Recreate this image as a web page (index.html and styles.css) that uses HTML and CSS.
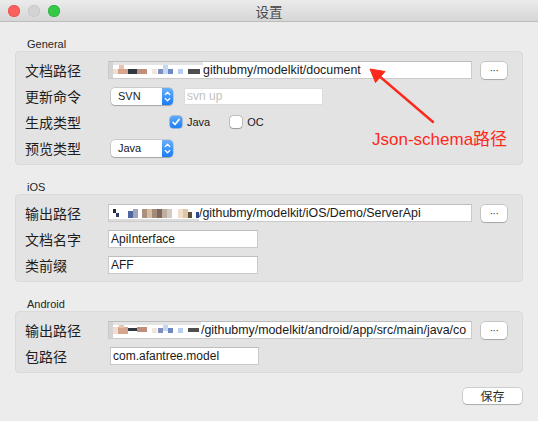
FILE: index.html
```html
<!DOCTYPE html>
<html>
<head>
<meta charset="utf-8">
<title>设置</title>
<link rel="stylesheet" href="styles.css">
</head>
<body>
<div class="window">
  <div class="titlebar">
    <div class="lights">
      <span class="light red"></span>
      <span class="light gray"></span>
      <span class="light green"></span>
    </div>
    <div class="title">设置</div>
    <div></div>
  </div>

  <div class="content">
    <div class="group-label">General</div>
    <div class="box">
      <div class="row">
        <span class="label">文档路径</span>
        <div class="field wide path">
          <span class="mosaic mg"></span>
          <span class="val">githubmy/modelkit/document</span>
        </div>
        <button class="btn dots">···</button>
      </div>
      <div class="row">
        <span class="label">更新命令</span>
        <div class="popup">
          <span class="popup-text">SVN</span>
          <span class="stepper"><svg width="11" height="17" viewBox="0 0 11 17"><path d="M3.2 6.6 L5.5 4.3 L7.8 6.6 M3.2 10.4 L5.5 12.7 L7.8 10.4" fill="none" stroke="#fff" stroke-width="1.3" stroke-linecap="round" stroke-linejoin="round"/></svg></span>
        </div>
        <div class="field cmd"><span class="placeholder">svn up</span></div>
      </div>
      <div class="row">
        <span class="label">生成类型</span>
        <label class="check first">
          <span class="box-check on"><svg width="12" height="12" viewBox="0 0 12 12"><path d="M3 6.3 L5 8.5 L9 3.4" fill="none" stroke="#fff" stroke-width="1.6" stroke-linecap="round" stroke-linejoin="round"/></svg></span>
          <span class="check-text">Java</span>
        </label>
        <label class="check second">
          <span class="box-check"></span>
          <span class="check-text">OC</span>
        </label>
      </div>
      <div class="row">
        <span class="label">预览类型</span>
        <div class="popup">
          <span class="popup-text">Java</span>
          <span class="stepper"><svg width="11" height="17" viewBox="0 0 11 17"><path d="M3.2 6.6 L5.5 4.3 L7.8 6.6 M3.2 10.4 L5.5 12.7 L7.8 10.4" fill="none" stroke="#fff" stroke-width="1.3" stroke-linecap="round" stroke-linejoin="round"/></svg></span>
        </div>
      </div>
    </div>

    <div class="group-label">iOS</div>
    <div class="box">
      <div class="row">
        <span class="label">输出路径</span>
        <div class="field wide path">
          <span class="mosaic mi"></span>
          <span class="val">/githubmy/modelkit/iOS/Demo/ServerApi</span>
        </div>
        <button class="btn dots">···</button>
      </div>
      <div class="row">
        <span class="label">文档名字</span>
        <div class="field short"><span class="val">ApiInterface</span></div>
      </div>
      <div class="row">
        <span class="label">类前缀</span>
        <div class="field short"><span class="val">AFF</span></div>
      </div>
    </div>

    <div class="group-label">Android</div>
    <div class="box">
      <div class="row">
        <span class="label">输出路径</span>
        <div class="field wide path">
          <span class="mosaic ma"></span>
          <span class="val">/githubmy/modelkit/android/app/src/main/java/co</span>
        </div>
        <button class="btn dots">···</button>
      </div>
      <div class="row">
        <span class="label">包路径</span>
        <div class="field short pkg"><span class="val">com.afantree.model</span></div>
      </div>
    </div>

    <div class="footer">
      <button class="btn save">保存</button>
    </div>
  </div>

  <svg class="annot-arrow" width="538" height="421" viewBox="0 0 538 421">
    <path d="M433 122 L378 75" stroke="#fb2a1c" stroke-width="2.4" stroke-linecap="round" fill="none"/>
    <path d="M370 69 L385 71.5 L375.5 82.5 Z" fill="#fb2a1c" stroke="#fb2a1c" stroke-width="1" stroke-linejoin="round"/>
  </svg>
  <div class="annot-text">Json-schema路径</div>
</div>
</body>
</html>
```
FILE: styles.css
```css
* { box-sizing: border-box; }

html, body {
  margin: 0;
  padding: 0;
  background: #ececec;
}

.window {
  position: relative;
  width: 538px;
  height: 421px;
  background: #ececec;
  font-family: "Liberation Sans", "Noto Sans CJK SC", sans-serif;
  color: #1d1d1d;
  overflow: hidden;
}

/* title bar */
.titlebar {
  height: 22px;
  display: grid;
  grid-template-columns: 1fr auto 1fr;
  align-items: center;
  background: linear-gradient(#ebebeb, #d6d6d6);
  border-bottom: 1px solid #bdbdbd;
}
.lights {
  display: flex;
  gap: 8px;
  padding-left: 8px;
}
.light {
  width: 12px;
  height: 12px;
  border-radius: 50%;
}
.light.red { background: #fc605c; box-shadow: inset 0 0 0 0.5px #df4744; }
.light.gray { background: #d3d3d3; box-shadow: inset 0 0 0 0.5px #c0c0c0; }
.light.green { background: #35c94a; box-shadow: inset 0 0 0 0.5px #24a732; }
.title {
  font-family: "Noto Sans CJK SC", sans-serif;
  font-size: 13.5px;
  color: #4b4b4b;
  line-height: 22px;
}

/* content */
.content {
  padding: 0 15px;
}
.group-label {
  margin-top: 16px;
  padding-left: 12px;
  font-size: 11px;
  line-height: 13px;
  height: 13px;
  color: #262626;
}
.box {
  background: #e3e3e3;
  border: 1px solid #dadada;
  border-radius: 4px;
  padding: 5px 15px 3px 9px;
}
.row {
  height: 26px;
  display: flex;
  align-items: center;
}
.label {
  width: 83px;
  flex: none;
  font-family: "Noto Sans CJK SC", sans-serif;
  font-size: 14px;
  color: #1e1e1e;
  line-height: 18px;
}

/* text fields */
.field {
  height: 18px;
  background: #fff;
  border: 1px solid #cacaca;
  border-top-color: #bdbdbd;
  display: flex;
  align-items: center;
  padding-left: 2px;
  overflow: hidden;
  white-space: nowrap;
  font-size: 12px;
  color: #1a1a1a;
}
.field.wide { width: 364px; flex: none; }
.field.short { width: 150px; flex: none; }
.field.pkg { margin-left: 2px; width: 149px; }
.field.cmd {
  width: 139px;
  height: 17px;
  margin-left: 11px;
  border-color: #dcdcdc;
}
.placeholder { color: #c2c2c2; }
.field.path {
  padding-left: 0;
  font-size: 12.4px;
}
.val {
  line-height: 16px;
  min-width: 0;
  overflow: hidden;
  white-space: nowrap;
}

/* pixelated (blurred-out) path prefix */
.mosaic {
  flex: none;
  height: 16px;
  background-color: #fff;
  background-repeat: no-repeat;
}
.mosaic.mg {
  width: 94px;
  background-image:
    linear-gradient(#d4d4d4, #d4d4d4),
    linear-gradient(#e4e4e4, #e4e4e4),
    linear-gradient(#e9c3ad, #e9c3ad),
    linear-gradient(#f2ddd0, #f2ddd0),
    linear-gradient(#d5a58e, #d5a58e),
    linear-gradient(#2f3740, #2f3740),
    linear-gradient(#bf8f7c, #bf8f7c),
    linear-gradient(#efe6de, #efe6de),
    linear-gradient(#7d8fbf, #7d8fbf),
    linear-gradient(#c5d8f2, #c5d8f2),
    linear-gradient(#6f87c2, #6f87c2),
    linear-gradient(#b6cff0, #b6cff0),
    linear-gradient(#4f4f4f, #4f4f4f);
  background-position:
    0 0, 0 0, 10px 2px, 4px 7px, 9px 7px, 19px 7px, 28px 7px,
    43px 7px, 49px 7px, 54px 2px, 59px 7px, 69px 7px, 79px 7px;
  background-size:
    4px 16px, 94px 3px, 5px 5px, 5px 5px, 10px 5px, 9px 5px, 10px 5px,
    5px 5px, 5px 5px, 5px 10px, 5px 5px, 5px 5px, 12px 5px;
}
.mosaic.ma {
  width: 92px;
  background-image:
    linear-gradient(#d4d4d4, #d4d4d4),
    linear-gradient(#e4e4e4, #e4e4e4),
    linear-gradient(#e9c3ad, #e9c3ad),
    linear-gradient(#f2ddd0, #f2ddd0),
    linear-gradient(#d5a58e, #d5a58e),
    linear-gradient(#2f3740, #2f3740),
    linear-gradient(#bf8f7c, #bf8f7c),
    linear-gradient(#efe6de, #efe6de),
    linear-gradient(#7d8fbf, #7d8fbf),
    linear-gradient(#c5d8f2, #c5d8f2),
    linear-gradient(#6f87c2, #6f87c2),
    linear-gradient(#b6cff0, #b6cff0),
    linear-gradient(#4f4f4f, #4f4f4f);
  background-position:
    0 0, 0 0, 10px 1px, 4px 5px, 9px 5px, 19px 6px, 28px 5px,
    43px 6px, 49px 6px, 54px 1px, 59px 6px, 69px 6px, 79px 6px;
  background-size:
    4px 16px, 92px 3px, 5px 5px, 5px 7px, 10px 7px, 9px 3px, 10px 5px,
    5px 5px, 5px 5px, 5px 8px, 5px 5px, 5px 5px, 11px 4px;
}
.mosaic.mi {
  width: 90px;
  background-image:
    linear-gradient(#1f2a36, #1f2a36),
    linear-gradient(#2c3f66, #2c3f66),
    linear-gradient(#4f67a0, #4f67a0),
    linear-gradient(#9ea6b8, #9ea6b8),
    linear-gradient(#ad8f80, #ad8f80),
    linear-gradient(#d6bf9f, #d6bf9f),
    linear-gradient(#a38a7b, #a38a7b),
    linear-gradient(#7e675f, #7e675f),
    linear-gradient(#bfae9f, #bfae9f),
    linear-gradient(#d3cbc3, #d3cbc3),
    linear-gradient(#f1ddc9, #f1ddc9),
    linear-gradient(#dfc6a6, #dfc6a6),
    linear-gradient(#5c4d3e, #5c4d3e),
    linear-gradient(#2f4a82, #2f4a82),
    linear-gradient(#dcdcdc, #dcdcdc);
  background-position:
    4px 4px, 7px 8px, 19px 6px, 24px 4px, 33px 4px, 38px 4px, 43px 4px,
    48px 4px, 53px 4px, 58px 4px, 69px 4px, 74px 4px, 79px 7px, 87px 7px, 0 14px;
  background-size:
    3px 4px, 3px 4px, 5px 7px, 5px 9px, 5px 9px, 5px 9px, 5px 9px,
    5px 9px, 5px 9px, 5px 9px, 5px 9px, 5px 9px, 4px 6px, 3px 6px, 90px 2px;
}

/* popup buttons */
.popup {
  flex: none;
  margin-left: 3px;
  width: 62px;
  height: 17px;
  background: #fff;
  border-radius: 4px;
  box-shadow: 0 0 0 0.5px rgba(0, 0, 0, 0.22), 0 1px 1px rgba(0, 0, 0, 0.18);
  display: flex;
  align-items: center;
  justify-content: space-between;
  overflow: hidden;
}
.popup-text {
  padding-left: 7px;
  font-size: 11px;
  color: #1a1a1a;
}
.stepper {
  width: 11px;
  height: 17px;
  background: linear-gradient(#6aaffa, #1a7cf4);
  display: flex;
}

/* checkboxes */
.check {
  display: flex;
  align-items: center;
  gap: 5px;
}
.check.first { margin-left: 62px; }
.check.second { margin-left: 20px; }
.box-check {
  width: 12px;
  height: 12px;
  border-radius: 3px;
  background: #fff;
  box-shadow: 0 0 0 0.5px rgba(0, 0, 0, 0.3), 0 0.5px 1px rgba(0, 0, 0, 0.2);
  display: flex;
}
.box-check.on {
  background: linear-gradient(#5ea9fa, #1d7ff5);
  box-shadow: 0 0 0 0.5px rgba(10, 90, 200, 0.6);
}
.check-text {
  font-size: 11px;
  color: #1a1a1a;
}

/* push buttons */
.btn {
  flex: none;
  background: #fff;
  border: none;
  border-radius: 4px;
  box-shadow: 0 0 0 0.5px rgba(0, 0, 0, 0.25), 0 1px 1px rgba(0, 0, 0, 0.16);
  padding: 0;
  color: #2a2a2a;
  font-family: "Liberation Sans", "Noto Sans CJK SC", sans-serif;
}
.dots {
  margin-left: 9px;
  width: 26px;
  height: 17px;
  font-size: 10px;
  line-height: 17px;
  letter-spacing: -0.5px;
}
.footer {
  margin-top: 15px;
  display: flex;
  justify-content: flex-end;
  padding-right: 1px;
}
.save {
  width: 59px;
  height: 16px;
  font-family: "Noto Sans CJK SC", sans-serif;
  font-size: 12px;
  line-height: 16px;
}

/* red annotation */
.annot-arrow {
  position: absolute;
  left: 0;
  top: 0;
  pointer-events: none;
}
.annot-text {
  position: absolute;
  left: 372px;
  top: 129px;
  font-family: "Liberation Sans", "Noto Sans CJK SC", sans-serif;
  font-size: 17px;
  line-height: 22px;
  color: #fb2a1c;
  white-space: nowrap;
}
```
